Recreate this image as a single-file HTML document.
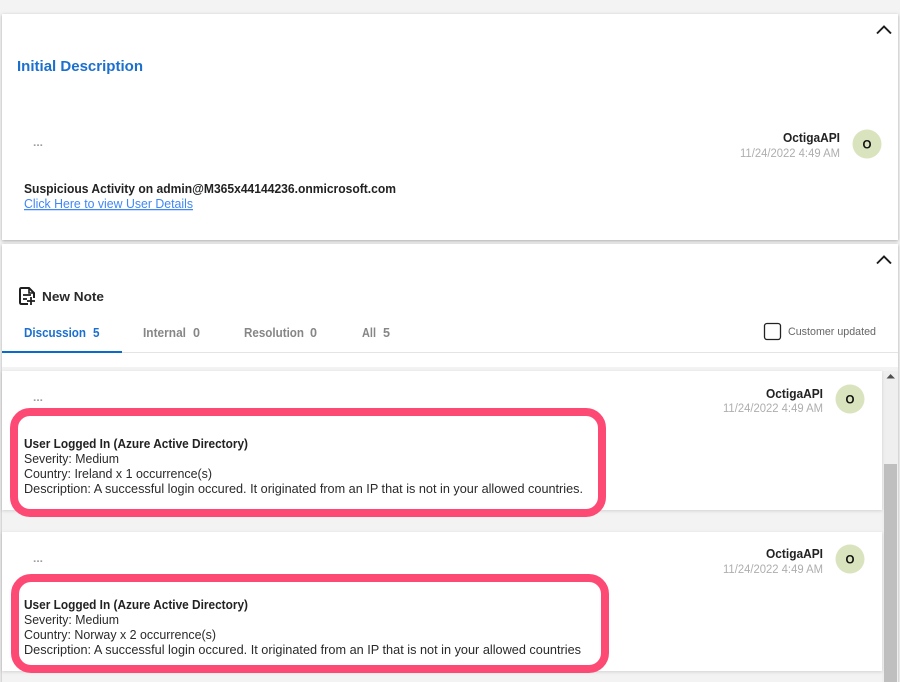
<!DOCTYPE html>
<html>
<head>
<meta charset="utf-8">
<style>
html,body{margin:0;padding:0;background:#f3f3f3;width:900px;height:682px;overflow:hidden}
svg{display:block}
text{font-family:"Liberation Sans",sans-serif;font-size:12.5px;fill:#2a2a2a}
.b{font-weight:bold;fill:#222}
.d{fill:#aeaeae;font-size:11.5px}
.t{font-weight:bold;fill:#868686;font-size:12.5px}
.av{font-weight:bold;fill:#111;font-size:12px}
.dots{fill:#9c9c9c;font-size:11px;font-weight:bold}
</style>
</head>
<body>
<svg width="900" height="682" viewBox="0 0 900 682" xmlns="http://www.w3.org/2000/svg">
<defs>
<filter id="s" x="-5%" y="-10%" width="110%" height="120%"><feDropShadow dx="0" dy="1" stdDeviation="1.500" flood-color="#000" flood-opacity="0.3"/></filter>
<filter id="s2" x="-5%" y="-10%" width="110%" height="120%"><feDropShadow dx="0" dy="1" stdDeviation="1.500" flood-color="#000" flood-opacity="0.14"/></filter>
</defs>
<rect width="900" height="682" fill="#f3f3f3"/>

<!-- Card 1 -->
<rect x="2" y="14" width="896" height="226" fill="#fff" filter="url(#s)"/>
<path d="M877 33.500L884 26.500L891 33.500" fill="none" stroke="#1c1c1c" stroke-width="1.900"/>
<text x="17" y="71" font-weight="bold" style="font-size:15px;fill:#1b6fce" textLength="126" lengthAdjust="spacingAndGlyphs">Initial Description</text>
<text x="33" y="146" class="dots" textLength="10" lengthAdjust="spacingAndGlyphs">...</text>
<text x="783" y="142" class="b" textLength="57" lengthAdjust="spacingAndGlyphs">OctigaAPI</text>
<text x="740" y="157" class="d" textLength="100" lengthAdjust="spacingAndGlyphs">11/24/2022 4:49 AM</text>
<circle cx="867" cy="144" r="14.500" fill="#d9e3bd"/>
<text x="862.500" y="148.500" class="av" textLength="9" lengthAdjust="spacingAndGlyphs">O</text>
<text x="24" y="193" class="b" textLength="372" lengthAdjust="spacingAndGlyphs">Suspicious Activity on admin@M365x44144236.onmicrosoft.com</text>
<text x="24" y="208" style="fill:#3f87f5" text-decoration="underline" textLength="169" lengthAdjust="spacingAndGlyphs">Click Here to view User Details</text>

<!-- Card 2 -->
<rect x="2" y="244" width="896" height="460" fill="#fff" filter="url(#s)"/>
<path d="M877 263.500L884 256.500L891 263.500" fill="none" stroke="#1c1c1c" stroke-width="1.900"/>
<path d="M28 304H21.500Q20 304 20 302.500V289.500Q20 288 21.500 288H29L34 293V298" fill="none" stroke="#1f1f1f" stroke-width="2"/>
<path d="M29 288V293H34" fill="none" stroke="#1f1f1f" stroke-width="1.600"/>
<path d="M23 295H31M23 299H27M31 297V305M27 301H35" fill="none" stroke="#1f1f1f" stroke-width="1.800"/>
<text x="42" y="301" font-weight="bold" style="font-size:13px;fill:#2a2a2a" textLength="62" lengthAdjust="spacingAndGlyphs">New Note</text>

<text x="24" y="337" class="t" style="fill:#1b6fce" textLength="62" lengthAdjust="spacingAndGlyphs">Discussion</text>
<text x="93" y="337" class="t" style="fill:#1b6fce" textLength="6.500" lengthAdjust="spacingAndGlyphs">5</text>
<text x="143" y="337" class="t" textLength="43" lengthAdjust="spacingAndGlyphs">Internal</text>
<text x="193" y="337" class="t" textLength="7" lengthAdjust="spacingAndGlyphs">0</text>
<text x="244" y="337" class="t" textLength="60" lengthAdjust="spacingAndGlyphs">Resolution</text>
<text x="310" y="337" class="t" textLength="7" lengthAdjust="spacingAndGlyphs">0</text>
<text x="362" y="337" class="t" textLength="14" lengthAdjust="spacingAndGlyphs">All</text>
<text x="383" y="337" class="t" textLength="7" lengthAdjust="spacingAndGlyphs">5</text>
<rect x="2" y="352" width="896" height="1" fill="#e4e4e4"/>
<rect x="2" y="351" width="120" height="2" fill="#0b6bcb"/>
<rect x="764.500" y="323.500" width="16" height="16" rx="2.500" fill="#fff" stroke="#222" stroke-width="1.300"/>
<text x="788" y="335" style="font-size:11px;fill:#666" textLength="88" lengthAdjust="spacingAndGlyphs">Customer updated</text>

<!-- List -->
<rect x="2" y="367" width="896" height="315" fill="#f3f3f3"/>
<rect x="882" y="371" width="16" height="311" fill="#efefef"/>
<path d="M886.500 378.500L890.500 374L895 378.500Z" fill="#505050"/>
<rect x="884" y="464" width="13" height="218" fill="#bfbfbf"/>

<!-- Item 1 -->
<rect x="2" y="371" width="880" height="139" fill="#fff" filter="url(#s2)"/>
<text x="33" y="401" class="dots" textLength="10" lengthAdjust="spacingAndGlyphs">...</text>
<text x="766" y="398" class="b" textLength="57" lengthAdjust="spacingAndGlyphs">OctigaAPI</text>
<text x="723" y="412" class="d" textLength="100" lengthAdjust="spacingAndGlyphs">11/24/2022 4:49 AM</text>
<circle cx="850" cy="399" r="14.500" fill="#d9e3bd"/>
<text x="845.500" y="403.500" class="av" textLength="9" lengthAdjust="spacingAndGlyphs">O</text>
<text x="24" y="448" class="b" textLength="224" lengthAdjust="spacingAndGlyphs">User Logged In (Azure Active Directory)</text>
<text x="24" y="463" textLength="95" lengthAdjust="spacingAndGlyphs">Severity: Medium</text>
<text x="24" y="478" textLength="188" lengthAdjust="spacingAndGlyphs">Country: Ireland x 1 occurrence(s)</text>
<text x="24" y="493" textLength="559" lengthAdjust="spacingAndGlyphs">Description: A successful login occured. It originated from an IP that is not in your allowed countries.</text>

<!-- Item 2 -->
<rect x="2" y="532" width="880" height="139" fill="#fff" filter="url(#s2)"/>
<text x="33" y="562" class="dots" textLength="10" lengthAdjust="spacingAndGlyphs">...</text>
<text x="766" y="558" class="b" textLength="57" lengthAdjust="spacingAndGlyphs">OctigaAPI</text>
<text x="723" y="573" class="d" textLength="100" lengthAdjust="spacingAndGlyphs">11/24/2022 4:49 AM</text>
<circle cx="850" cy="559" r="14.500" fill="#d9e3bd"/>
<text x="845.500" y="563.500" class="av" textLength="9" lengthAdjust="spacingAndGlyphs">O</text>
<text x="24" y="609" class="b" textLength="224" lengthAdjust="spacingAndGlyphs">User Logged In (Azure Active Directory)</text>
<text x="24" y="624" textLength="95" lengthAdjust="spacingAndGlyphs">Severity: Medium</text>
<text x="24" y="639" textLength="192" lengthAdjust="spacingAndGlyphs">Country: Norway x 2 occurrence(s)</text>
<text x="24" y="654" textLength="557" lengthAdjust="spacingAndGlyphs">Description: A successful login occured. It originated from an IP that is not in your allowed countries</text>

<!-- Highlights -->
<rect x="14" y="412" width="588" height="101" rx="16" fill="none" stroke="#fd4a75" stroke-width="8"/>
<rect x="15" y="578" width="590" height="91" rx="16" fill="none" stroke="#fd4a75" stroke-width="8"/>
</svg>
</body>
</html>
